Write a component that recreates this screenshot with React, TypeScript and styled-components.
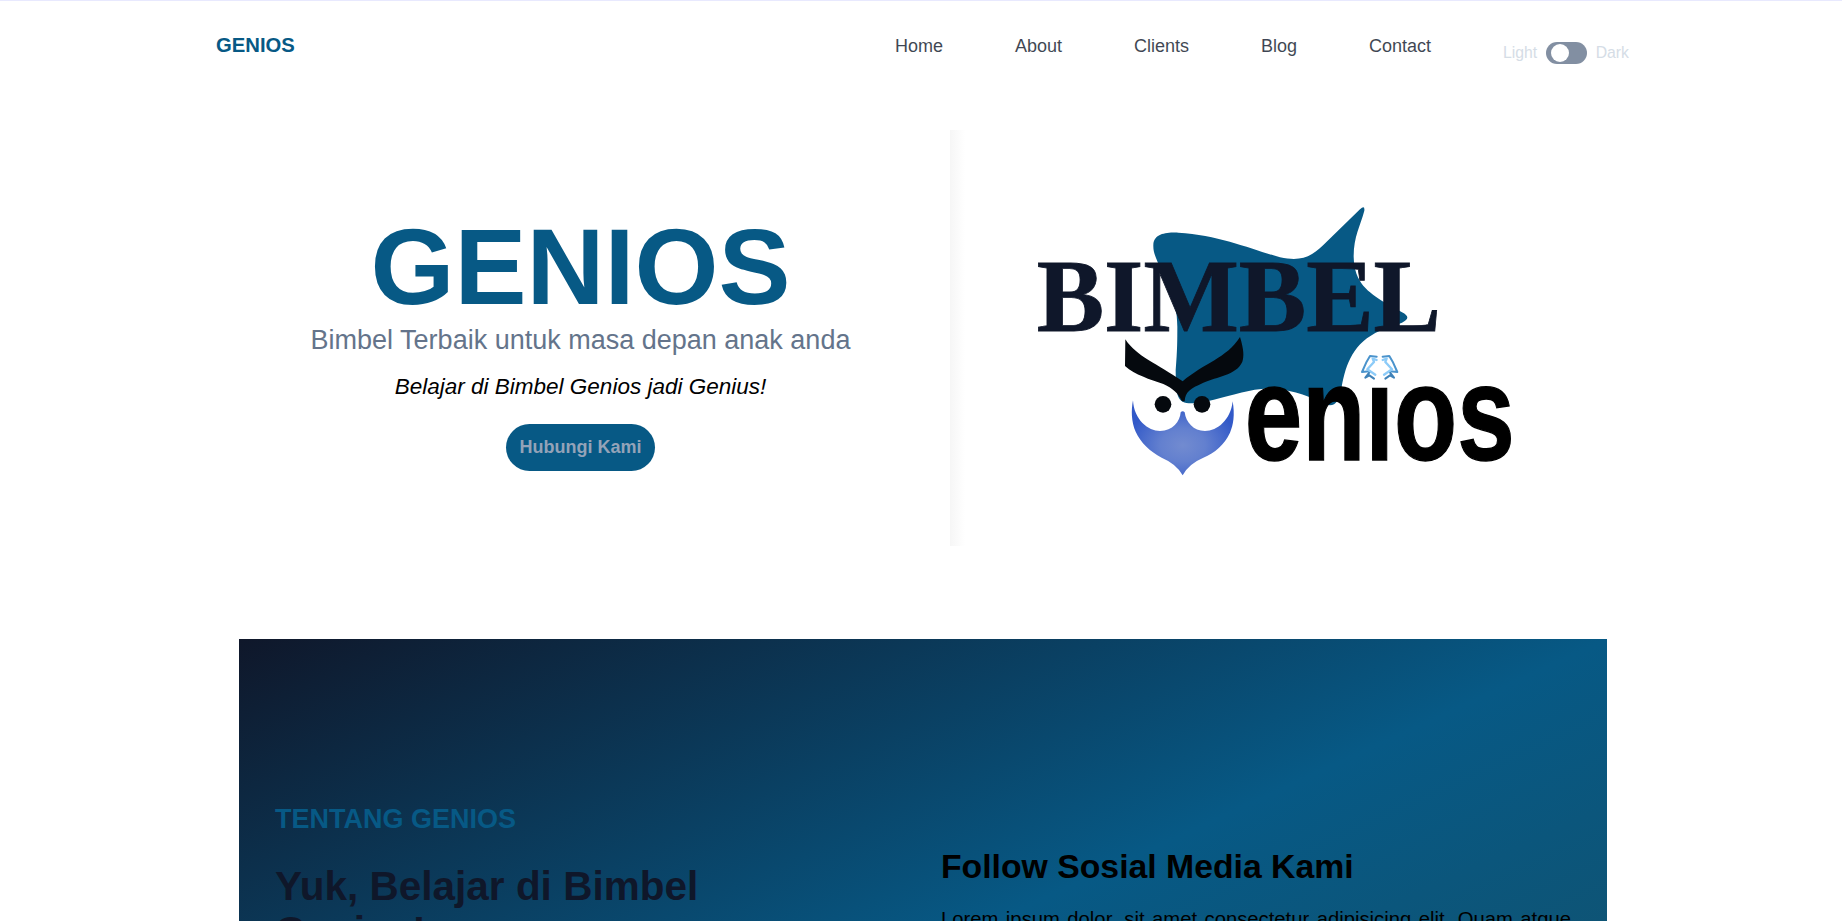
import React from "react";
import styled, { createGlobalStyle } from "styled-components";

const GlobalStyle = createGlobalStyle`
  html { font-size: 18px; }
  *, *::before, *::after { box-sizing: border-box; }
  body {
    margin: 0;
    height: 921px;
    overflow: hidden;
    background: #fff;
    color: #000;
    font-family: "Liberation Sans", Arial, sans-serif;
    line-height: 1.5;
  }
  h1, h2, h3, h4, p, ul { margin: 0; padding: 0; }
`;

const Page = styled.div`
  height: 921px;
  overflow: hidden;
  border-top: 1px solid #e8e9fe;
`;

const Header = styled.header`
  height: 93px;
  padding: 0 213px 0 216px;
  display: flex;
  justify-content: space-between;
  align-items: flex-start;
`;

const Brand = styled.a`
  margin-top: 30px;
  color: #075985;
  font-size: 1.125rem;
  font-weight: 700;
  line-height: 28px;
`;

const Nav = styled.ul`
  margin-top: 32px;
  display: flex;
  gap: 4rem;
  list-style: none;
  opacity: 0.8;
`;

const NavItem = styled.li`
  color: #0f172a;
  font-size: 1rem;
  line-height: 27px;
`;

const ThemeSwitch = styled.li`
  margin-top: 9px;
  height: 22px;
  display: flex;
  align-items: center;
  gap: 9px;
  color: #cbd5e1;
  font-size: 0.875rem;
  line-height: 22px;
`;

const Track = styled.span`
  width: 2.25rem;
  height: 22px;
  padding: 0.25rem;
  border-radius: 999px;
  background: #64748b;
  display: flex;
  align-items: center;
`;

const Knob = styled.span`
  width: 1rem;
  height: 1rem;
  border-radius: 50%;
  background: #fff;
`;

const Hero = styled.section`
  margin: 36px 216px 0;
  height: 416px;
  display: flex;
`;

const HeroText = styled.div`
  width: 729px;
  padding-top: 83px;
  display: flex;
  flex-direction: column;
  align-items: center;
`;

const Title = styled.h1`
  color: #075985;
  font-size: 6rem;
  font-weight: 700;
  line-height: 108px;
`;

const Subtitle = styled.h2`
  margin-top: 1px;
  color: #64748b;
  font-size: 1.5rem;
  font-weight: 400;
  line-height: 36px;
`;

const Tagline = styled.p`
  margin-top: 13px;
  font-size: 1.25rem;
  font-style: italic;
  line-height: 31.5px;
`;

const ContactButton = styled.button`
  margin-top: 21.5px;
  width: 149px;
  height: 47px;
  border: 0;
  padding: 0;
  border-radius: 999px;
  background: #075985;
  color: #94a3b8;
  font: 700 1rem/27px "Liberation Sans", Arial, sans-serif;
`;

const HeroArt = styled.div`
  flex: 1;
  margin-left: 5px;
  padding: 60px 0 0 70px;
  background: linear-gradient(to right, #f6f6f6, #ffffff 15px);
`;

const About = styled.section`
  margin: 93px 235px 0 239px;
  height: 629px;
  padding: 0 36px;
  display: flex;
  background: linear-gradient(to bottom right, #0f172a, #075985, #164e63);
`;

const AboutIntro = styled.div`
  width: 666px;
  padding-top: 162px;
`;

const Eyebrow = styled.h4`
  color: #075985;
  font-size: 1.5rem;
  line-height: 36px;
`;

const AboutTitle = styled.h2`
  margin-top: 27px;
  max-width: 504px;
  color: #0f172a;
  font-size: 2.25rem;
  line-height: 45px;
`;

const Social = styled.div`
  width: 630px;
  padding-top: 207px;
`;

const SocialTitle = styled.h3`
  font-size: 1.875rem;
  line-height: 40.5px;
`;

const SocialText = styled.p`
  margin-top: 17px;
  font-size: 1.125rem;
  line-height: 31.5px;
  text-align: justify;
`;

const navLinks = ["Home", "About", "Clients", "Blog", "Contact"];

function Wing() {
  return (
    <g fill="none" strokeLinejoin="round" strokeLinecap="round">
      <path d="M1070 500 L1050 498 L1040 515 L1026 546 L1048 544" stroke="#4a93cc" strokeWidth="6" />
      <path d="M1050 545 L1036 563 L1048 556 L1062 566" stroke="#3f82b8" strokeWidth="6" />
      <path d="M1070 510 L1058 506 L1062 516 L1042 538 L1066 554" stroke="#8ccbf8" strokeWidth="7" />
    </g>
  );
}

function GeniosLogo() {
  return (
    <svg width="500" height="300" viewBox="0 0 1500 900" role="img" aria-label="Bimbel Genios">
      <defs>
        <radialGradient id="beak" cx="50%" cy="60%" r="55%">
          <stop offset="0" stopColor="#728bd0" />
          <stop offset="0.4" stopColor="#6380cf" />
          <stop offset="1" stopColor="#3259c8" />
        </radialGradient>
      </defs>
      <path
        fill="#075985"
        d="M400 165 C402 130 440 127 475 128 C600 135 700 180 780 202 C840 214 870 204 910 165 L1020 58 Q1035 44 1033 62 C1020 110 1001 140 1001 200 C1003 280 1045 305 1095 338 L1146 367 Q1178 383 1146 398 L1080 422 C1000 458 978 520 965 590 C958 640 940 655 910 640 C830 600 760 588 690 602 C620 616 580 634 520 640 C470 642 468 620 467 540 C472 480 472 450 472 410 C472 320 440 300 425 250 C412 205 399 195 400 165 Z"
      />
      <text x="50" y="422.5" textLength="1213" lengthAdjust="spacingAndGlyphs" fill="#0f172a" stroke="#0f172a" strokeWidth="2.5" fontFamily="Liberation Serif, serif" fontWeight="700" fontSize="308">BIMBEL</text>
      <path fill="#05090e" d="M316 448 C350 500 410 520 488 574 C550 520 620 505 660 441 C672 480 672 500 667 515 C650 555 590 560 550 578 C510 596 496 605 494 634 L486 634 C475 610 460 596 430 582 C390 568 345 555 315 528 Z" />
      <circle cx="429" cy="643" r="25" fill="#05090e" />
      <circle cx="546" cy="643" r="25" fill="#05090e" />
      <path
        fill="url(#beak)"
        d="M339 631 C342 690 385 723 420 723 C458 723 480 695 482 667 Q488 660 494 667 C498 697 520 723 555 723 C592 723 632 690 638 634 C645 675 640 705 630 728 C612 765 585 788 550 803 Q505 822 488 856 Q470 822 425 803 C390 784 362 758 347 725 C334 697 333 660 339 631 Z"
      />
      <text x="674" y="810" textLength="810" lengthAdjust="spacingAndGlyphs" fill="#000" stroke="#000" strokeWidth="4" fontFamily="Liberation Sans, Arial, sans-serif" fontWeight="700" fontSize="404">enıos</text>
      <Wing />
      <g transform="translate(2158 0) scale(-1 1)"><Wing /></g>
    </svg>
  );
}

export default function App() {
  return (
    <Page>
      <GlobalStyle />
      <Header>
        <Brand>GENIOS</Brand>
        <Nav>
          {navLinks.map((label) => <NavItem key={label}>{label}</NavItem>)}
          <ThemeSwitch>
            <span>Light</span>
            <Track><Knob /></Track>
            <span>Dark</span>
          </ThemeSwitch>
        </Nav>
      </Header>
      <Hero>
        <HeroText>
          <Title>GENIOS</Title>
          <Subtitle>Bimbel Terbaik untuk masa depan anak anda</Subtitle>
          <Tagline>Belajar di Bimbel Genios jadi Genius!</Tagline>
          <ContactButton>Hubungi Kami</ContactButton>
        </HeroText>
        <HeroArt><GeniosLogo /></HeroArt>
      </Hero>
      <About>
        <AboutIntro>
          <Eyebrow>TENTANG GENIOS</Eyebrow>
          <AboutTitle>Yuk, Belajar di Bimbel Genios!</AboutTitle>
        </AboutIntro>
        <Social>
          <SocialTitle>Follow Sosial Media Kami</SocialTitle>
          <SocialText>Lorem ipsum dolor, sit amet consectetur adipisicing elit. Quam atque voluptatum</SocialText>
        </Social>
      </About>
    </Page>
  );
}
